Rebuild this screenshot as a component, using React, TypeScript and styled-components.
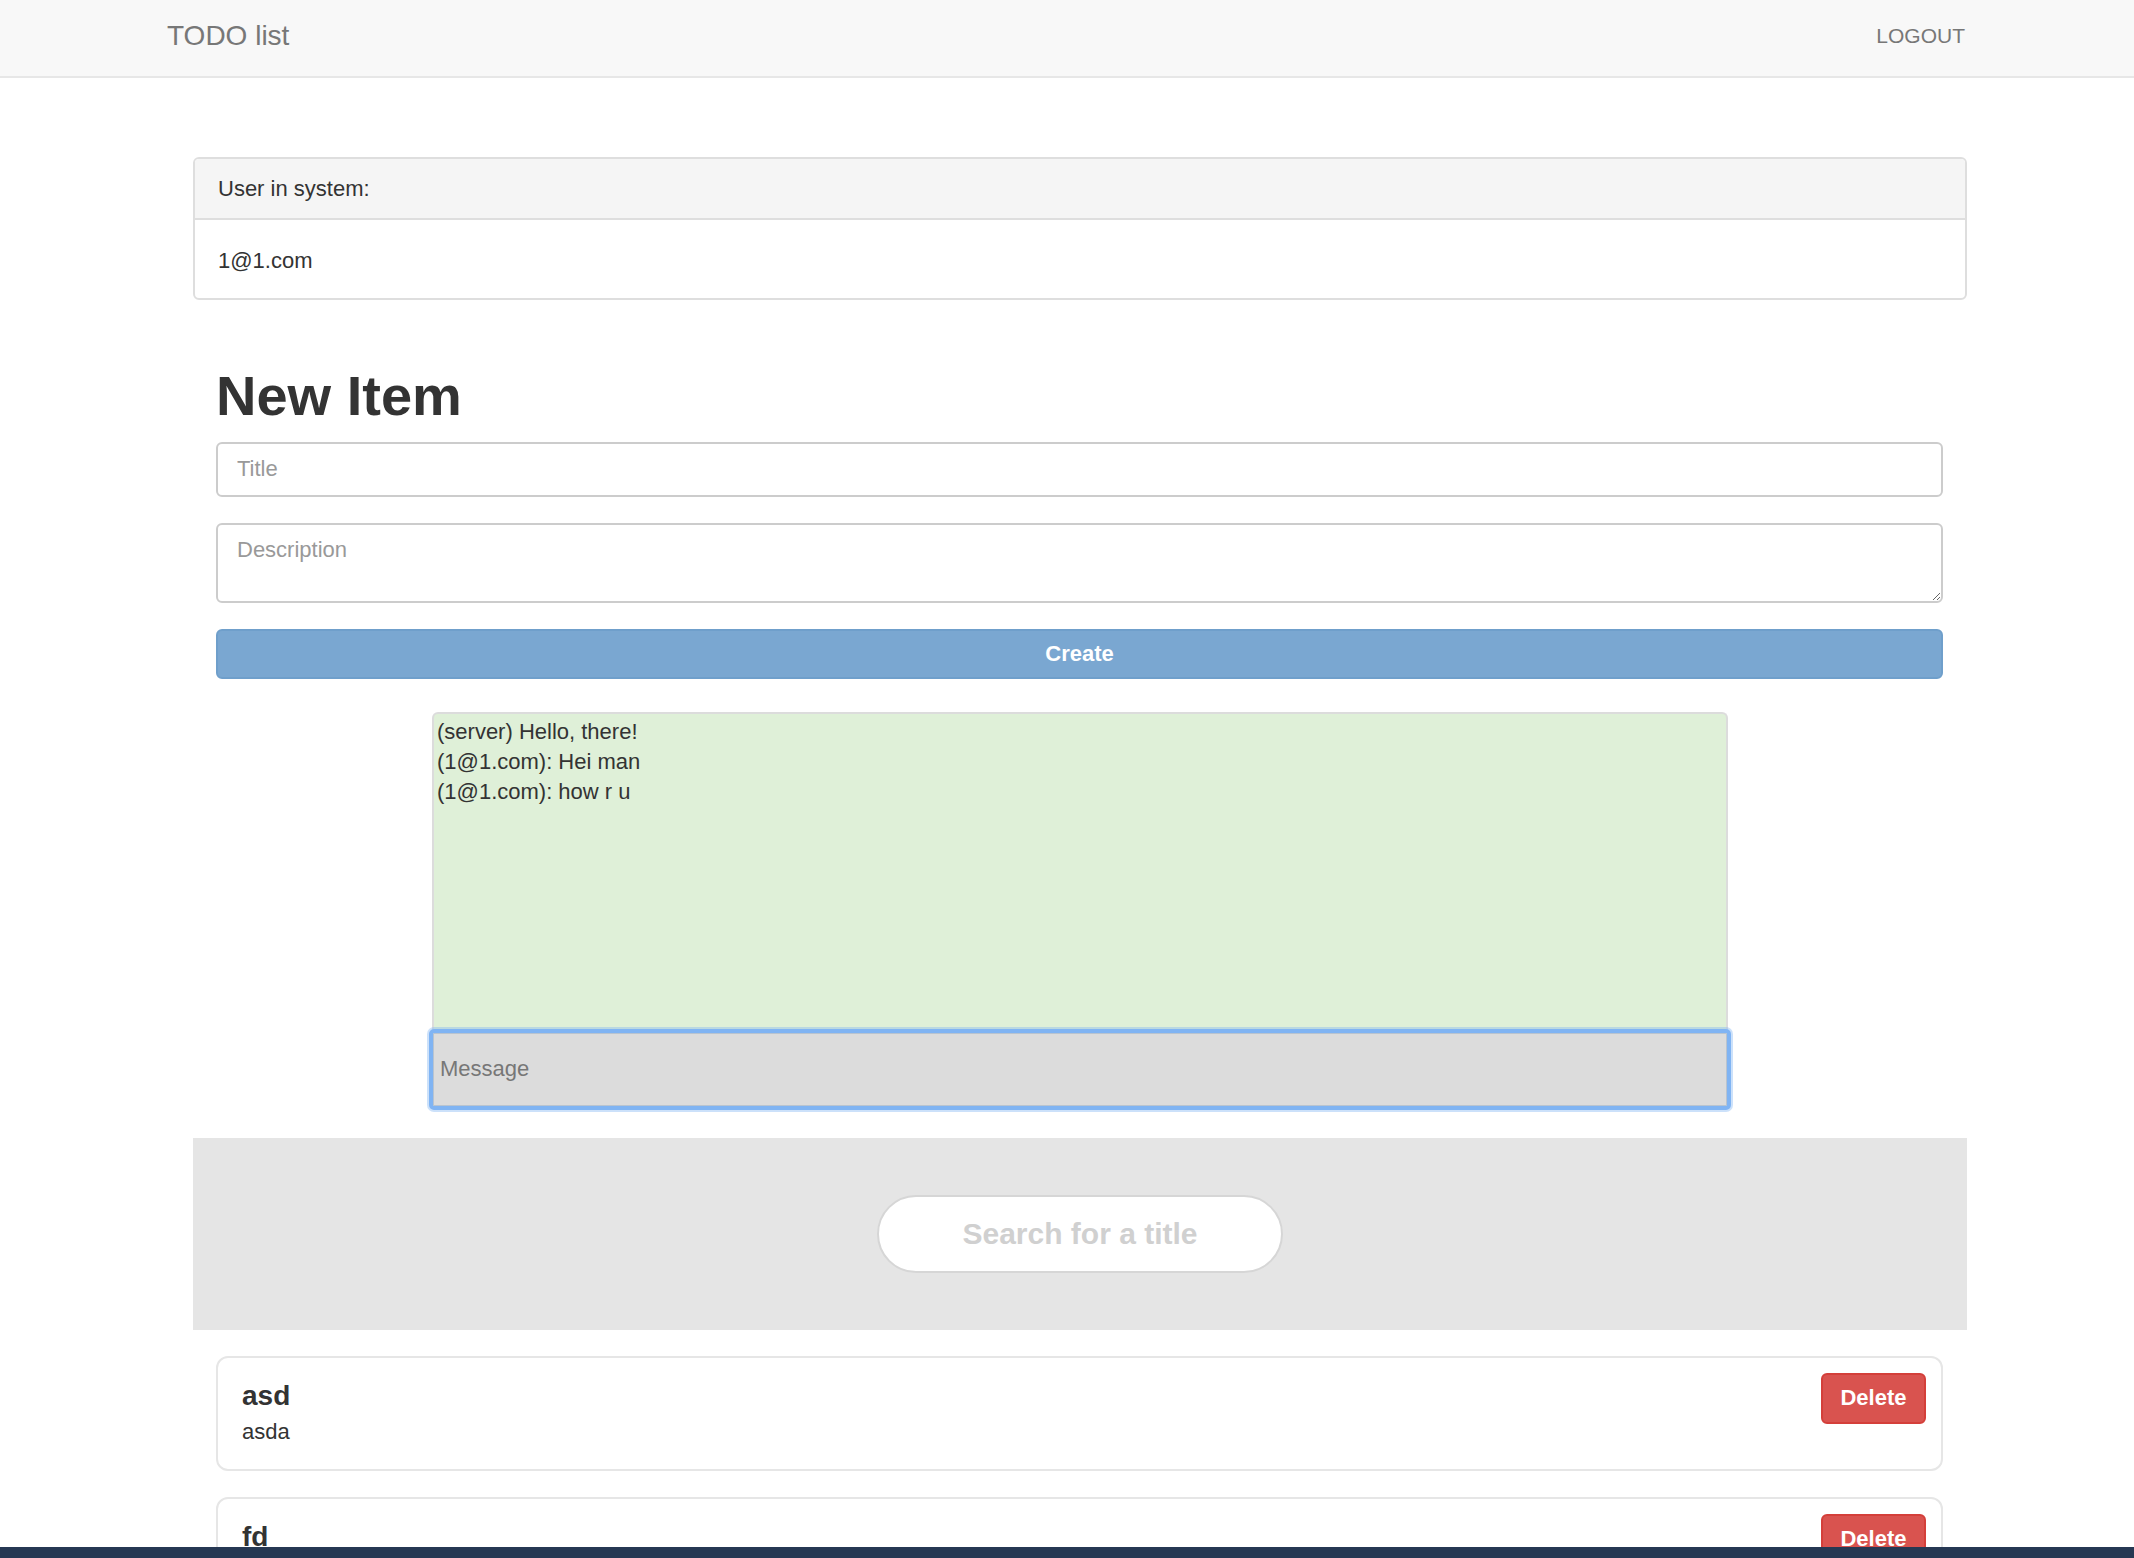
import React from 'react';
import styled, { createGlobalStyle } from 'styled-components';

const GlobalStyle = createGlobalStyle`
  html, body {
    margin: 0;
    padding: 0;
    height: 100%;
    overflow: hidden;
  }

  body {
    font-family: 'Liberation Sans', Arial, sans-serif;
    font-size: 22px;
    color: #333;
    background: #fff;
  }

  * {
    box-sizing: border-box;
  }
`;

const Screen = styled.div`
  display: flex;
  flex-direction: column;
  height: 100vh;
`;

const Navbar = styled.nav`
  flex-shrink: 0;
  display: flex;
  align-items: center;
  justify-content: space-between;
  height: 78px;
  padding: 0 167px;
  background: #f8f8f8;
  border-bottom: 2px solid #e7e7e7;
`;

const Brand = styled.a`
  color: #777;
  font-size: 28px;
  text-decoration: none;
  margin-top: -4px;
`;

const NavLink = styled.a`
  color: #777;
  font-size: 21px;
  text-decoration: none;
  margin-top: -4px;
  margin-right: 2px;
`;

const Main = styled.main`
  flex: 1;
  min-height: 0;
  overflow: hidden;
`;

const Container = styled.div`
  width: 1774px;
  margin-left: 193px;
  padding-top: 79px;
`;

const Panel = styled.section`
  border: 2px solid #dedede;
  border-radius: 6px;
  overflow: hidden;
`;

const PanelHeading = styled.div`
  display: flex;
  align-items: center;
  height: 61px;
  padding: 0 23px;
  background: #f5f5f5;
  border-bottom: 2px solid #dedede;
`;

const PanelBody = styled.div`
  display: flex;
  align-items: center;
  height: 78px;
  padding: 4px 23px 0;
`;

const Form = styled.form`
  display: flex;
  flex-direction: column;
  padding: 0 24px 0 23px;
`;

const Heading = styled.h1`
  margin: 65px 0 15px;
  font-size: 56px;
  line-height: 1.1;
  font-weight: bold;
  color: #333;
`;

const Field = styled.input`
  display: block;
  width: 100%;
  height: 55px;
  margin-bottom: 26px;
  padding: 0 19px;
  border: 2px solid #ccc;
  border-radius: 6px;
  font-family: inherit;
  font-size: 22px;
  color: #555;
  outline: none;

  &::placeholder {
    color: #999;
  }
`;

const Area = styled.textarea`
  display: block;
  width: 100%;
  height: 80px;
  margin: 0 0 26px;
  padding: 12px 19px;
  border: 2px solid #ccc;
  border-radius: 6px;
  font-family: inherit;
  font-size: 22px;
  color: #555;
  outline: none;

  &::placeholder {
    color: #999;
  }
`;

const CreateButton = styled.button`
  width: 100%;
  height: 50px;
  border: 2px solid #6f9fcb;
  border-radius: 6px;
  background: #7aa7d1;
  color: #fff;
  font-family: inherit;
  font-size: 22px;
  font-weight: bold;
  cursor: not-allowed;
`;

const Chat = styled.div`
  width: 1296px;
  margin: 33px auto 0;
`;

const ChatLog = styled.div`
  height: 317px;
  padding: 3px 3px;
  background: #dff0d8;
  border: 2px solid #dcdcdc;
  border-bottom: none;
  border-radius: 6px 6px 0 0;
  font-size: 22px;
  line-height: 30px;
  color: #333;
`;

const MessageInput = styled.input`
  display: block;
  width: calc(100% + 6px);
  height: 81px;
  margin: 0 -3px;
  padding: 0 7px;
  background: #dcdcdc;
  border: 4px solid #80b4f3;
  border-radius: 5px;
  box-shadow: 0 0 0 2px rgba(128, 180, 243, 0.4), inset 0 0 0 1px #b9c4d0;
  font-family: inherit;
  font-size: 22px;
  outline: none;

  &::placeholder {
    color: #777;
  }
`;

const SearchBand = styled.div`
  display: flex;
  align-items: center;
  justify-content: center;
  height: 192px;
  margin-top: 28px;
  background: #e5e5e5;
`;

const SearchInput = styled.input`
  width: 406px;
  height: 78px;
  border: 2px solid #d6d6d6;
  border-radius: 40px;
  background: #fff;
  text-align: center;
  font-family: inherit;
  font-size: 30px;
  font-weight: bold;
  outline: none;

  &::placeholder {
    color: #d0d0d0;
  }
`;

const List = styled.ul`
  list-style: none;
  margin: 26px 0 0;
  padding: 0 24px 0 23px;
  display: flex;
  flex-direction: column;
  gap: 26px;
`;

const Card = styled.li`
  display: flex;
  align-items: flex-start;
  justify-content: space-between;
  padding: 15px 15px 22px 24px;
  border: 2px solid #e6e6e6;
  border-radius: 12px;
`;

const CardText = styled.div`
  padding-top: 7px;
`;

const CardTitle = styled.h4`
  margin: 0 0 5px;
  font-size: 28px;
  line-height: 31px;
  font-weight: bold;
  color: #333;
`;

const CardDesc = styled.p`
  margin: 0;
  font-size: 22px;
  line-height: 31px;
`;

const DeleteButton = styled.button`
  width: 105px;
  height: 51px;
  border: 2px solid #d43f3a;
  border-radius: 6px;
  background: #d9534f;
  color: #fff;
  font-family: inherit;
  font-size: 22px;
  font-weight: bold;
  cursor: pointer;
`;

const BottomBar = styled.div`
  flex-shrink: 0;
  height: 11px;
  background: #263853;
`;

const messages = [
  '(server) Hello, there!',
  '(1@1.com): Hei man',
  '(1@1.com): how r u',
];

const items = [
  { title: 'asd', description: 'asda' },
  { title: 'fd', description: 'fdfd' },
];

export default function App() {
  return (
    <Screen>
      <GlobalStyle />
      <Navbar>
        <Brand href="#">TODO list</Brand>
        <NavLink href="#">LOGOUT</NavLink>
      </Navbar>
      <Main>
        <Container>
          <Panel>
            <PanelHeading>User in system:</PanelHeading>
            <PanelBody>1@1.com</PanelBody>
          </Panel>

          <Form onSubmit={(e) => e.preventDefault()}>
            <Heading>New Item</Heading>
            <Field placeholder="Title" />
            <Area placeholder="Description" />
            <CreateButton type="submit">Create</CreateButton>
          </Form>

          <Chat>
            <ChatLog>
              {messages.map((m, i) => (
                <div key={i}>{m}</div>
              ))}
            </ChatLog>
            <MessageInput placeholder="Message" />
          </Chat>

          <SearchBand>
            <SearchInput placeholder="Search for a title" />
          </SearchBand>

          <List>
            {items.map((item) => (
              <Card key={item.title}>
                <CardText>
                  <CardTitle>{item.title}</CardTitle>
                  <CardDesc>{item.description}</CardDesc>
                </CardText>
                <DeleteButton>Delete</DeleteButton>
              </Card>
            ))}
          </List>
        </Container>
      </Main>
      <BottomBar />
    </Screen>
  );
}
